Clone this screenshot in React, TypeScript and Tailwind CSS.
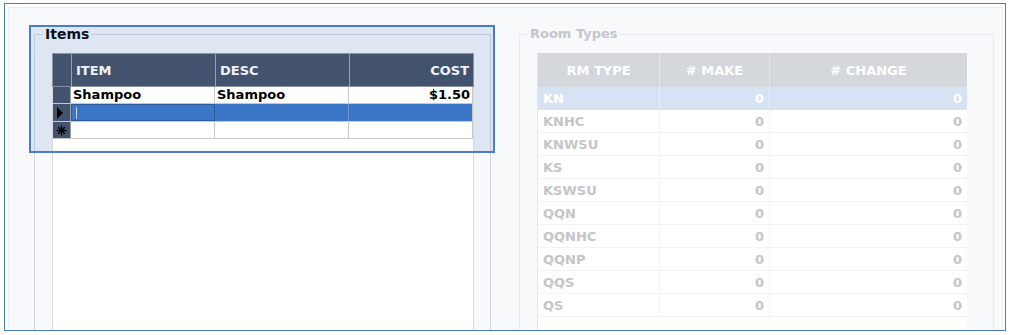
import React from "react";

const ITEM_COLS = [
  { key: "ITEM", w: "w-[144px]", align: "text-left" },
  { key: "DESC", w: "w-[134px]", align: "text-left" },
  { key: "COST", w: "flex-1", align: "text-right" },
];

const ROOM_TYPES = ["KN", "KNHC", "KNWSU", "KS", "KSWSU", "QQN", "QQNHC", "QQNP", "QQS", "QS"];

function RowPointer() {
  return (
    <svg width="8" height="12" viewBox="0 0 8 12">
      <path d="M1 0 L7 6 L1 12 Z" fill="#000" />
    </svg>
  );
}

function NewRowMark() {
  return (
    <svg width="11" height="11" viewBox="0 0 11 11" stroke="#000" strokeWidth="1.3">
      <path d="M5.5 0.5 V10.5 M0.5 5.5 H10.5 M2 2 L9 9 M9 2 L2 9" />
    </svg>
  );
}

function ItemsGrid() {
  return (
    <div className="relative z-10 ml-[9px] w-[422px] h-[320px] border border-[#d6d9dd] bg-white text-[13px] font-bold">
      {/* header */}
      <div className="flex h-[34px] -mx-[1px] -mt-[1px] bg-[#43536e] border border-[#8a93a0] text-[#eef2f8]">
        <div className="w-[19px] border-r border-[#9aa3b0]" />
        {ITEM_COLS.map((c, i) => (
          <div
            key={c.key}
            className={`${c.w} ${c.align} ${i < 2 ? "border-r border-[#9aa3b0]" : ""} px-[4px] pt-[7px]`}
          >
            {c.key}
          </div>
        ))}
      </div>
      {/* row 1 */}
      <div className="flex h-[17px] border-b border-[#c9c9c9] leading-[16px] text-black">
        <div className="w-[18px] bg-[#43536e] border-r border-[#9aa3b0]" />
        <div className="w-[144px] border-r border-[#c9c9c9] px-[2px]">Shampoo</div>
        <div className="w-[134px] border-r border-[#c9c9c9] px-[2px]">Shampoo</div>
        <div className="flex-1 text-right px-[2px] border-r border-[#c9c9c9]">$1.50</div>
      </div>
      {/* row 2, being edited */}
      <div className="flex h-[18px] border-b border-[#c9c9c9] bg-[#3b76c6]">
        <div className="w-[18px] bg-[#43536e] border-r border-[#9aa3b0] flex items-center pl-[3px]">
          <RowPointer />
        </div>
        <div className="w-[144px] border border-[#2e5b99] bg-[#3b76c6] flex items-center pl-[4px]">
          <div className="w-[1px] h-[12px] bg-[#c7d3e6]" />
        </div>
        <div className="w-[134px] border-r border-[#6b93cc]" />
        <div className="flex-1 border-r border-[#c9c9c9]" />
      </div>
      {/* new row */}
      <div className="flex h-[17px] border-b border-[#c9c9c9]">
        <div className="w-[18px] bg-[#43536e] border-r border-[#9aa3b0] flex items-center justify-center">
          <NewRowMark />
        </div>
        <div className="w-[144px] border-r border-[#c9c9c9]" />
        <div className="w-[134px] border-r border-[#c9c9c9]" />
        <div className="flex-1 border-r border-[#c9c9c9]" />
      </div>
    </div>
  );
}

function RoomGrid() {
  return (
    <div className="ml-[9px] w-[430px] h-[320px] border-l border-[#e4e6e9] bg-white text-[13px] font-bold">
      <div className="flex h-[34px] bg-[#d4d7dc] text-white">
        <div className="w-[122px] border-r border-[#e3e5e8] text-center pt-[8px]">RM TYPE</div>
        <div className="w-[110px] border-r border-[#e3e5e8] text-center pt-[8px]">
          # MAKE
        </div>
        <div className="flex-1 text-center pt-[8px]">
          # CHANGE
        </div>
      </div>
      {ROOM_TYPES.map((rt, i) => (
        <div
          key={rt}
          className={`flex h-[23px] leading-[23px] border-b ${
            i === 0 ? "bg-[#d7e2f2] text-white border-[#d7e2f2]" : "text-[#c5c5c5] border-[#f3f3f3]"
          } ${i === ROOM_TYPES.length - 1 ? "border-[#dedede]" : ""}`}
        >
          <div className={`w-[122px] px-[5px] border-r ${i === 0 ? "border-[#e8eef7]" : "border-[#f3f3f3]"}`}>{rt}</div>
          <div className={`w-[110px] px-[5px] text-right border-r ${i === 0 ? "border-[#e8eef7]" : "border-[#f3f3f3]"}`}>0</div>
          <div className="flex-1 px-[5px] text-right">0</div>
        </div>
      ))}
    </div>
  );
}

export default function App() {
  return (
    <div className="relative w-[1010px] h-[335px] bg-white pt-[3px] pl-[4px] font-['DejaVu_Sans',Verdana,sans-serif]">
      <div className="w-[1002px] h-[328px] border border-[#4d7cc4] pt-[3px] pl-[3px] pr-[2px] overflow-hidden">
        <div className="h-[340px] border border-[#eceef2] bg-[#f8f9fb] overflow-hidden flex gap-[28px] pl-[25px] pt-[18px]">
          {/* Items */}
          <fieldset className="w-[457px] h-[400px] border border-[#d3d8df] px-[8px] pt-[11px]">
            <legend className="px-[2px] text-[14px] leading-[16px] font-bold text-black">Items</legend>
            <ItemsGrid />
          </fieldset>

          {/* Room Types */}
          <fieldset className="w-[475px] h-[400px] border border-[#e6e9ed] px-[8px] pt-[11px]">
            <legend className="px-[2px] text-[13px] leading-[16px] font-bold text-[#c3c6cb]">Room Types</legend>
            <RoomGrid />
          </fieldset>
        </div>
      </div>

      {/* focus highlight over the Items panel */}
      <div className="absolute left-[29px] top-[25px] w-[466px] h-[128px] bg-[#4a7cc7]/15 z-[5]" />
      <div className="absolute left-[29px] top-[25px] w-[466px] h-[128px] border-2 border-[#4d7cc4] z-20" />
    </div>
  );
}
